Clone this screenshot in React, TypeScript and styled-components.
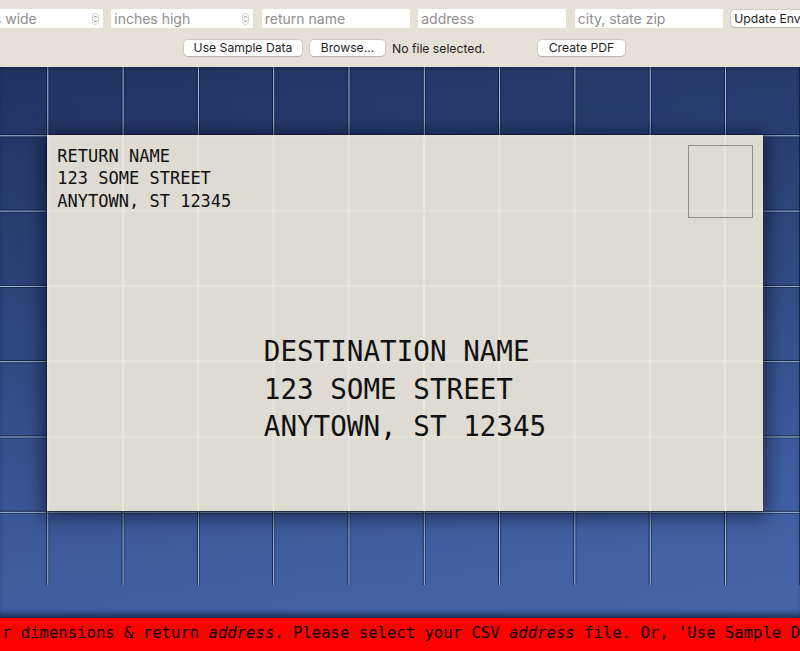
import React from "react";
import styled, { createGlobalStyle } from "styled-components";

const INCH = 75.3;

const Global = createGlobalStyle`
  html, body { margin: 0; padding: 0; }
  body {
    width: 800px;
    height: 651px;
    overflow: hidden;
    background: #e6e1d6;
    font-family: Inter, "Liberation Sans", Arial, sans-serif;
  }
`;

const Page = styled.div`
  display: flex;
  flex-direction: column;
  width: 800px;
  height: 651px;
  overflow: hidden;
`;

const Toolbar = styled.header`
  flex: 0 0 67px;
  display: flex;
  flex-direction: column;
  gap: 12px;
  padding-top: 9px;
  box-sizing: border-box;
  background: #e6e1d6;
  position: relative;
  z-index: 2;
  box-shadow: 0 1px 3px rgba(0, 0, 0, 0.3);
`;

const Row = styled.div<{ $gap: number; $shift: number }>`
  display: flex;
  justify-content: center;
  align-items: center;
  gap: ${(p) => p.$gap}px;
  padding: 0 ${(p) => (p.$shift < 0 ? -p.$shift : 0)}px 0 ${(p) => (p.$shift > 0 ? p.$shift : 0)}px;
  white-space: nowrap;
`;

const Field = styled.div<{ $w: number }>`
  flex: 0 0 auto;
  width: ${(p) => p.$w}px;
  min-width: 0;
  height: 19px;
  display: flex;
  align-items: center;
  background: #ffffff;
  border-radius: 1px;
  box-sizing: border-box;
  padding: 0 4px 0 3px;
`;

const Input = styled.input`
  flex: 1 1 0;
  width: 0;
  min-width: 0;
  border: none;
  outline: none;
  background: transparent;
  font-family: Inter, "Liberation Sans", Arial, sans-serif;
  font-size: 14px;
  color: #222;
  padding: 0;
  &::placeholder { color: #8e8e8e; }
`;

const Spinner = styled.svg`
  flex: 0 0 7px;
  width: 7px;
  height: 12px;
`;

const Button = styled.button<{ $w: number; $h: number }>`
  flex: 0 0 auto;
  width: ${(p) => p.$w}px;
  height: ${(p) => p.$h}px;
  padding: 0;
  border: none;
  border-radius: 4px;
  background: #ffffff;
  box-shadow: 0 0 0 0.5px rgba(0, 0, 0, 0.18), 0 1px 1px rgba(0, 0, 0, 0.12);
  font-family: Inter, "Liberation Sans", Arial, sans-serif;
  font-size: 12.2px;
  line-height: ${(p) => p.$h}px;
  color: #1e1e1e;
  text-align: center;
  white-space: nowrap;
  overflow: hidden;
`;

const FilePicker = styled.div`
  flex: 0 0 220px;
  display: flex;
  align-items: center;
  gap: 7px;
`;

const FileNote = styled.span`
  font-size: 12.2px;
  color: #1e1e1e;
`;

const Stage = styled.main`
  flex: 0 0 551px;
  display: flex;
  justify-content: center;
  align-items: flex-start;
  overflow: hidden;
  background: linear-gradient(172deg, #1f325f 0%, #2c4479 35%, #3f5e9f 80%, #4667aa 100%);
  box-shadow: inset 0 -7px 6px -3px rgba(10, 20, 45, 0.7);
`;

const line = (dir: string) => `linear-gradient(to ${dir},
    rgba(6, 14, 40, 0.8) 0px, rgba(6, 14, 40, 0.8) 1px,
    #a9cbef 1px, #a9cbef 2.3px,
    rgba(6, 14, 40, 0.5) 2.3px, rgba(6, 14, 40, 0.5) 3.3px,
    transparent 3.3px)`;

const Grid = styled.section`
  flex: 0 0 ${INCH * 11.5}px;
  height: ${INCH * 7 - 2}px;
  margin-top: -7.5px;
  margin-left: 10px;
  padding: ${INCH}px 0 0 ${INCH}px;
  box-sizing: border-box;
  background-image: ${line("right")}, ${line("bottom")};
  background-size: ${INCH}px ${INCH}px;
  background-position: -1px -1px;
`;

const Envelope = styled.article`
  width: ${INCH * 9.5}px;
  height: ${INCH * 5}px;
  box-sizing: border-box;
  padding: 10px;
  display: flex;
  flex-direction: column;
  background-color: #dedbd3;
  background-image:
    linear-gradient(to right, rgba(248, 246, 228, 0.4) 0px, rgba(248, 246, 228, 0.4) 1.5px, transparent 1.5px),
    linear-gradient(to bottom, rgba(248, 246, 228, 0.3) 0px, rgba(248, 246, 228, 0.3) 1.5px, transparent 1.5px);
  background-size: ${INCH}px ${INCH}px;
  background-position: -0.5px -0.5px;
  box-shadow: 0 2px 18px 3px rgba(0, 5, 20, 0.6);
  font-family: "DejaVu Sans Mono", Menlo, monospace;
  color: #111;
`;

const EnvelopeHead = styled.div`
  display: flex;
  justify-content: space-between;
  align-items: flex-start;
`;

const Address = styled.div<{ $size: number; $lh: number }>`
  font-size: ${(p) => p.$size}px;
  line-height: ${(p) => p.$lh}px;
  white-space: pre;
`;

const Destination = styled(Address)`
  align-self: center;
  margin-top: 115px;
`;

const Stamp = styled.div`
  width: 65px;
  height: 73px;
  box-sizing: border-box;
  border: 1px solid #8f8e8a;
`;

const Ticker = styled.footer`
  flex: 0 0 33px;
  background: #ff0000;
  color: #000;
  font-family: "DejaVu Sans Mono", Menlo, monospace;
  font-size: 15.6px;
  line-height: 30px;
  padding-left: 2px;
  white-space: nowrap;
  overflow: hidden;
  position: relative;
  z-index: 1;
`;

const Em = styled.em`
  font-style: italic;
`;

const SpinIcon = () => (
  <Spinner viewBox="0 0 7 12">
    <rect x="0.5" y="0.5" width="6" height="11" rx="3" fill="none" stroke="#c4c4c4" strokeWidth="0.8" />
    <path d="M2 4.6 L3.5 3 L5 4.6 M2 7.4 L3.5 9 L5 7.4" fill="none" stroke="#777" strokeWidth="0.9" />
  </Spinner>
);

export default function App() {
  return (
    <Page>
      <Global />
      <Toolbar>
        <Row $gap={8.5} $shift={-10}>
          <Field $w={148}>
            <Input placeholder="inches wide" />
            <SpinIcon />
          </Field>
          <Field $w={142}>
            <Input placeholder="inches high" />
            <SpinIcon />
          </Field>
          <Field $w={148}>
            <Input placeholder="return name" />
          </Field>
          <Field $w={148}>
            <Input placeholder="address" />
          </Field>
          <Field $w={148}>
            <Input placeholder="city, state zip" />
          </Field>
          <Button $w={104} $h={17}>Update Envelope</Button>
        </Row>
        <Row $gap={8} $shift={9}>
          <Button $w={118} $h={16}>Use Sample Data</Button>
          <FilePicker>
            <Button $w={75} $h={16}>Browse...</Button>
            <FileNote>No file selected.</FileNote>
          </FilePicker>
          <Button $w={87} $h={16}>Create PDF</Button>
        </Row>
      </Toolbar>
      <Stage>
        <Grid>
          <Envelope>
            <EnvelopeHead>
              <Address $size={17} $lh={22.6}>{"RETURN NAME\n123 SOME STREET\nANYTOWN, ST 12345"}</Address>
              <Stamp />
            </EnvelopeHead>
            <Destination $size={27.6} $lh={37.8}>{"DESTINATION NAME\n123 SOME STREET\nANYTOWN, ST 12345"}</Destination>
          </Envelope>
        </Grid>
      </Stage>
      <Ticker>
        r dimensions &amp; return <Em>address</Em>. Please select your CSV <Em>address</Em> file. Or, 'Use Sample Data' to see how it works.
      </Ticker>
    </Page>
  );
}
